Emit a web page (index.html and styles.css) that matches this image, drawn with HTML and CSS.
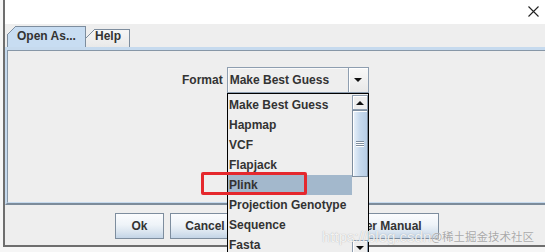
FILE: index.html
```html
<!DOCTYPE html>
<html>
<head>
<meta charset="utf-8">
<link rel="stylesheet" href="styles.css">
</head>
<body>
<div class="window">
  <div class="titlebar">
    <svg class="close" width="11" height="11" viewBox="0 0 11 11"><path d="M0.5 0.5L10.5 10.5M10.5 0.5L0.5 10.5" stroke="#222" stroke-width="1.1" fill="none"/></svg>
  </div>
  <div class="content">
    <div class="tabs">
      <div class="tab active">Open As...</div>
      <div class="tab">Help</div>
    </div>
    <div class="panel">
      <div class="panel-inner">
        <div class="format-row">
          <span class="label">Format</span>
          <div class="combo">
            <span class="combo-text">Make Best Guess</span>
            <span class="combo-btn"><span class="tri-down"></span></span>
          </div>
        </div>
      </div>
    </div>
    <div class="buttons">
      <button class="btn btn-ok">Ok</button>
      <button class="btn btn-cancel">Cancel</button>
      <button class="btn btn-manual">User Manual</button>
    </div>
  </div>
</div>

<div class="popup">
  <div class="items">
    <div class="item">Make Best Guess</div>
    <div class="item">Hapmap</div>
    <div class="item">VCF</div>
    <div class="item">Flapjack</div>
    <div class="item selected">Plink</div>
    <div class="item">Projection Genotype</div>
    <div class="item">Sequence</div>
    <div class="item">Fasta</div>
  </div>
  <div class="scrollbar">
    <div class="sb-btn"><span class="tri-up"></span></div>
    <div class="thumb"><span class="grip"></span><span class="grip"></span><span class="grip"></span></div>
    <div class="track"></div>
    <div class="sb-btn"><span class="tri-down"></span></div>
  </div>
</div>

<div class="highlight"></div>

<div class="watermark">
  <span class="wm-url">https://blog.csdn</span>
  <span class="wm-cn">@稀土掘金技术社区</span>
</div>
</body>
</html>
```

FILE: styles.css
```css
* { box-sizing: border-box; }

body {
  margin: 0;
  width: 545px;
  height: 252px;
  overflow: hidden;
  position: relative;
  background: #f6f6f6;
  font-family: "Liberation Sans", Arial, sans-serif;
  font-weight: bold;
  font-size: 12px;
  color: #333;
}

.window {
  margin-left: 3px;
  height: 247px;
  border-left: 2px solid #6e6e6e;
  border-bottom: 2px solid #6e6e6e;
  display: flex;
  flex-direction: column;
  background: #fff;
}

.titlebar {
  height: 24px;
  background: #fff;
  display: flex;
  justify-content: flex-end;
  align-items: flex-start;
  padding: 6px 6px 0 0;
  flex: none;
}

.close { display: block; }

.content {
  flex: 1;
  background: #eeeeee;
  display: flex;
  flex-direction: column;
}

.tabs {
  display: flex;
  align-items: flex-end;
  padding: 2px 0 0 2px;
  height: 23px;
  flex: none;
}

.tab {
  position: relative;
  border-top: 1px solid #7d8d9e;
  border-right: 1px solid #7d8d9e;
  border-left: 1px solid #7d8d9e;
}

.tab::before {
  content: "";
  position: absolute;
  left: -1px;
  top: -1px;
  width: 9px;
  height: 9px;
  background: linear-gradient(to bottom right, #eeeeee 0, #eeeeee calc(50% - 0.7px), #7d8d9e calc(50% - 0.7px), #7d8d9e calc(50% + 0.7px), transparent calc(50% + 0.7px));
}

.tab.active {
  width: 79px;
  height: 21px;
  line-height: 19px;
  padding-left: 9px;
  background: #c8ddf2;
  z-index: 1;
}

.tab:not(.active) {
  width: 44px;
  height: 18px;
  line-height: 13px;
  padding-left: 9px;
  border-left: none;
  background: linear-gradient(#f6f6f6, #e9e9e9);
}

.tab:not(.active)::before {
  left: 0;
}

.panel {
  height: 158px;
  flex: none;
  border-top: 3px solid #c6daee;
  border-left: 2px solid #c6daee;
  border-bottom: 2px solid #7c8b9a;
}

.panel-inner {
  height: 100%;
  border-top: 1px solid #8797a7;
  border-left: 1px solid #8797a7;
  border-bottom: 1px solid #c6daee;
}

.format-row {
  display: flex;
  align-items: center;
  gap: 4px;
  padding: 16px 0 0 174px;
}

.label {
  display: block;
}

.combo {
  width: 142px;
  height: 26px;
  border: 1px solid #8e9eb0;
  background: #eeeeee;
  display: flex;
}

.combo-text {
  flex: 1;
  padding-left: 2px;
  line-height: 24px;
  box-shadow: inset 1px 1px 0 #fafafa;
}

.combo-btn {
  width: 20px;
  border-left: 1px solid #8e9eb0;
  background: linear-gradient(#f8f8f8, #e8e8e8);
  display: flex;
  align-items: center;
  justify-content: center;
  box-shadow: inset 1px 1px 0 #fff;
}

.tri-down {
  width: 0;
  height: 0;
  border-left: 4px solid transparent;
  border-right: 4px solid transparent;
  border-top: 4px solid #111;
}

.tri-up {
  width: 0;
  height: 0;
  border-left: 4px solid transparent;
  border-right: 4px solid transparent;
  border-bottom: 4px solid #111;
}

.buttons {
  flex: 1;
  display: flex;
  align-items: flex-start;
  padding: 8px 0 0 110px;
}

.btn {
  height: 26px;
  margin: 0;
  padding: 0;
  border: 1px solid #7d8d9e;
  border-radius: 0;
  background: linear-gradient(#fbfcfe 0%, #eef3f8 45%, #d9e4ef 75%, #c3d4e6 100%);
  font: inherit;
  color: #333;
  text-align: center;
}

.btn-ok { width: 49px; }
.btn-cancel { width: 70px; margin-left: 6px; }
.btn-manual { width: 106px; margin-left: 93px; }

.popup {
  position: absolute;
  left: 227px;
  top: 93px;
  width: 142px;
  height: 165px;
  border: 1px solid #000;
  background: #eeeeee;
  display: flex;
  z-index: 2;
}

.items {
  flex: 1;
  padding-top: 1px;
}

.item {
  height: 20px;
  line-height: 20px;
  padding-left: 1px;
  white-space: nowrap;
}

.item.selected {
  background: #a3b8cc;
}

.scrollbar {
  width: 16px;
  padding-top: 1px;
  display: flex;
  flex-direction: column;
}

.sb-btn {
  height: 15px;
  flex: none;
  border: 1px solid #8e9eb0;
  background: #eeeeee;
  box-shadow: inset 1px 1px 0 #fff;
  display: flex;
  align-items: center;
  justify-content: center;
}

.thumb {
  height: 67px;
  flex: none;
  border: 1px solid #7d8d9e;
  background: linear-gradient(to right, #eaf2fa, #c6d9ed 50%, #b8cee6);
  box-shadow: inset 1px 1px 0 #fff;
  display: flex;
  flex-direction: column;
  align-items: center;
  justify-content: center;
  gap: 1px;
}

.grip {
  width: 8px;
  height: 1px;
  background: #7d8d9e;
  box-shadow: 0 1px 0 #fff;
}

.track {
  height: 63px;
  flex: none;
  background: #eeeeee;
}

.highlight {
  position: absolute;
  left: 201px;
  top: 172px;
  width: 106px;
  height: 23px;
  border: 3px solid #e5282d;
  border-radius: 2px;
  z-index: 3;
}

.watermark {
  position: absolute;
  left: 322px;
  top: 228px;
  height: 16px;
  display: flex;
  align-items: center;
  z-index: 4;
  white-space: nowrap;
}

.wm-url {
  font-family: "Liberation Sans", Arial, sans-serif;
  font-weight: normal;
  font-size: 15px;
  color: rgba(255, 255, 255, 0.85);
  text-shadow: 0 0 1px rgba(120, 120, 120, 0.6);
}

.wm-cn {
  margin-left: 0;
  font-family: "Noto Sans CJK SC", sans-serif;
  font-weight: normal;
  font-size: 11.5px;
  color: #a9a9a9;
  text-shadow: 0 0 1px #fff;
}
```
